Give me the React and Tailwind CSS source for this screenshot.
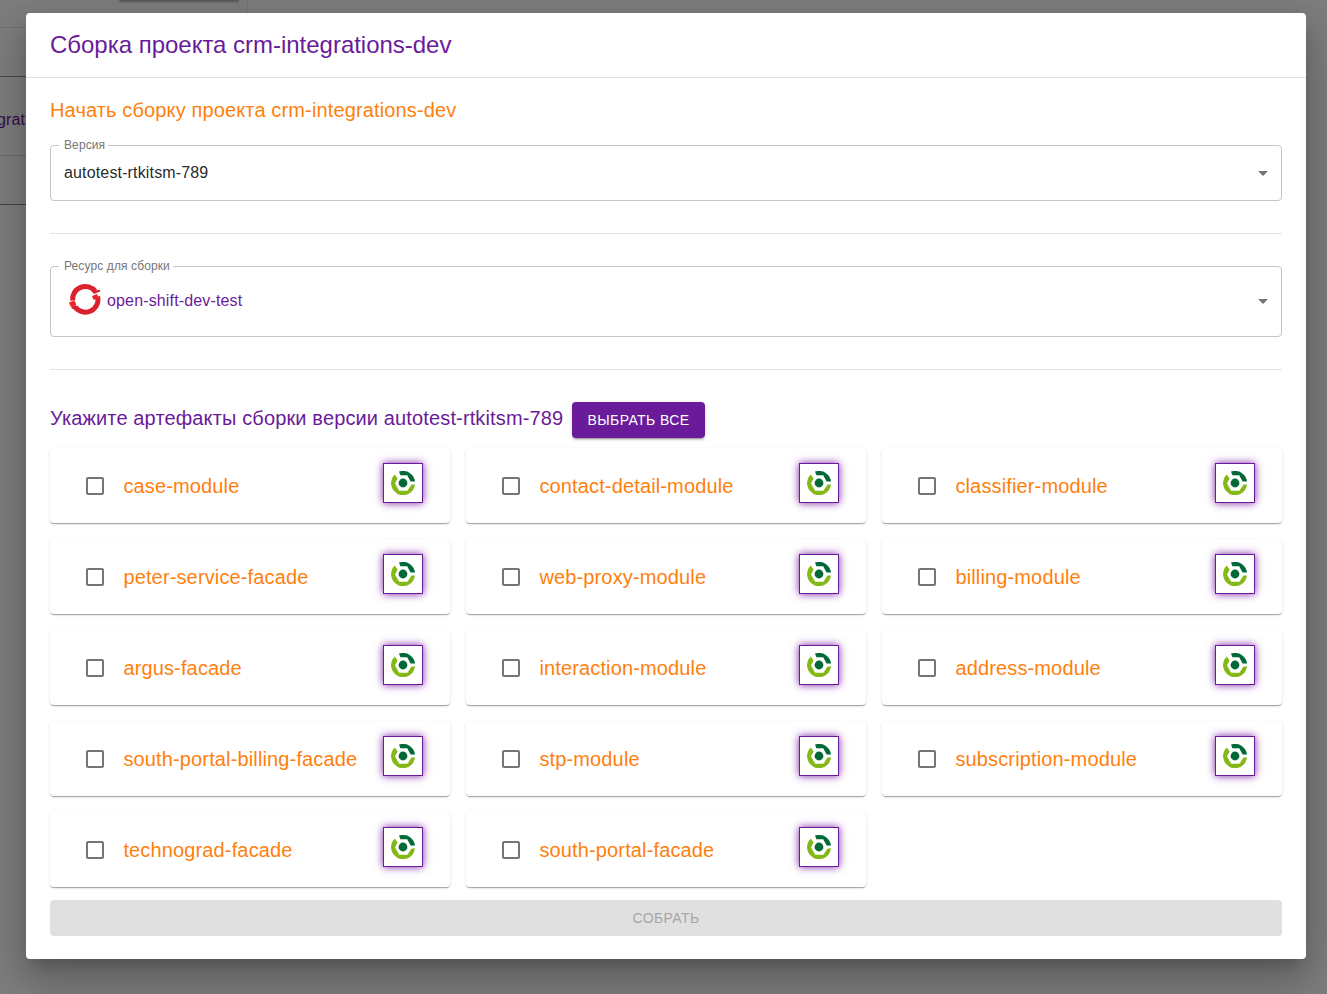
const modules = [
  'case-module', 'contact-detail-module', 'classifier-module',
  'peter-service-facade', 'web-proxy-module', 'billing-module',
  'argus-facade', 'interaction-module', 'address-module',
  'south-portal-billing-facade', 'stp-module', 'subscription-module',
  'technograd-facade', 'south-portal-facade',
];

function GoIcon() {
  return (
    <svg className="block size-6" viewBox="0 0 24 24">
      <path d="M3.7 3.6A12 12 0 1 0 24 13.6H20.6L16.4 19.8H8.2L4 12.5L6.6 7.4Z" fill="#84b817" />
      <path d="M8 .6A12 12 0 0 1 24 10.6H19.6L16.2 4.3H9.4Z" fill="#006937" />
      <circle cx="12" cy="12" r="4.4" fill="#006937" />
    </svg>
  );
}

function OpenShiftIcon() {
  return (
    <svg className="block size-8" viewBox="0 0 32 32">
      <path d="M3.700 17.500A12.600 12.600 0 0 1 26.200 8.400" stroke="#db212e" strokeWidth="5" fill="none" />
      <path d="M28.600 13.500A12.600 12.600 0 0 1 6.200 24" stroke="#db212e" strokeWidth="5" fill="none" />
      <path d="M23.400 8.600l4-1.200 3.200-1 .6 2.200-6.400 2.400zM2.600 25.200l-.4-1.800 4-1.400 2 2-3 2.600z" fill="#db212e" />
      <path d="M23 13l5-1.900 1.600 4-5 1.900zM0 19.400l5.400-1.900 2 4.300-5.700 2z" fill="#ef2424" />
    </svg>
  );
}

function Field({ label, children, height }) {
  return (
    <fieldset className={`-mt-[5px] flex rounded-[4px] border border-[#c4c4c4] pl-[13px] pr-[6px] ${height}`}>
      <legend className="-ml-[5px] h-[11px] pl-[5px] pr-[3px] text-[12px] leading-[11px] tracking-[0.11px] text-[#757575]">{label}</legend>
      <div className="-mt-[6px] flex flex-1 items-center justify-between">
        {children}
        <svg className="size-6 shrink-0" viewBox="0 0 24 24" fill="#757575"><path d="M7 10l5 5 5-5z" /></svg>
      </div>
    </fieldset>
  );
}

function Card({ name }) {
  return (
    <div className="flex h-[75px] items-start rounded-[4px] bg-white pl-[33px] pr-[27px] shadow-[0px_2px_1px_-1px_rgba(0,0,0,0.2),0px_1px_1px_0px_rgba(0,0,0,0.14),0px_1px_3px_0px_rgba(0,0,0,0.12)]">
      <svg className="mt-[26px] size-6 shrink-0" viewBox="0 0 24 24" fill="#757575">
        <path d="M19 5v14H5V5h14m0-2H5c-1.1 0-2 .9-2 2v14c0 1.1.9 2 2 2h14c1.1 0 2-.9 2-2V5c0-1.1-.9-2-2-2z" />
      </svg>
      <span className="ml-[16.4px] mt-[22px] flex-1 whitespace-nowrap text-[20px] leading-8 tracking-[0.14px] text-[#ff7f0e]">{name}</span>
      <span className="mt-[15px] flex size-10 shrink-0 justify-center border border-[#6a1b9a] bg-white pt-[7px] shadow-[0_0_8px_#7b1fa2]"><GoIcon /></span>
    </div>
  );
}

export default function App() {
  return (
    <div className="relative h-[994px] w-[1327px] overflow-hidden bg-[#7e7e7e] font-['Liberation_Sans',sans-serif]">
      <div className="w-[248px] border-r border-[#767676]">
        <div className="h-7 border-b border-[#707070] pl-[119px]">
          <div className="h-px w-[120px] rounded-b bg-[#5c5c5c] shadow-[0_1px_2px_#444]" />
        </div>
        <div className="h-[49px] border-b border-[#484848]" />
        <div className="flex h-[79px] items-center border-b border-[#6b6b6b] text-[16px] tracking-[0.15px] text-[#350d4d]">
          <span className="-ml-[3px] mt-[7px]">grat</span>
        </div>
        <div className="h-[49px] border-b border-[#444]" />
      </div>
      <div role="dialog" className="absolute left-[26px] top-[13px] h-[946px] w-[1280px] rounded-[4px] bg-white shadow-[0px_11px_15px_-7px_rgba(0,0,0,0.2),0px_24px_38px_3px_rgba(0,0,0,0.14),0px_9px_46px_8px_rgba(0,0,0,0.12)]">
        <h1 className="h-[65px] border-b border-[#e0e0e0] px-6 pt-4 text-[24px] leading-8 tracking-[-0.02px] text-[#6a1b9a]">Сборка проекта crm-integrations-dev</h1>
        <div className="px-6 pt-4">
          <h2 className="mb-[19px] text-[20px] leading-8 tracking-[0.135px] text-[#ff7f0e]">Начать сборку проекта crm-integrations-dev</h2>
          <Field label="Версия" height="h-[61px]">
            <span className="text-[16px] tracking-[0.15px] text-black/87">autotest-rtkitsm-789</span>
          </Field>
          <hr className="my-8 border-[#e0e0e0]" />
          <Field label="Ресурс для сборки" height="h-[76px]">
            <span className="-mt-[3px] flex items-start gap-[6px] pl-[5px] text-[16px] leading-8 tracking-[0.15px] text-[#6a1b9a]"><OpenShiftIcon /><span className="mt-[2px]">open-shift-dev-test</span></span>
          </Field>
          <hr className="my-8 border-[#e0e0e0]" />
          <div className="mb-[10px] flex h-9 justify-between pr-[577px]">
            <h2 className="text-[20px] leading-8 tracking-[0.135px] whitespace-nowrap text-[#6a1b9a]">Укажите артефакты сборки версии autotest-rtkitsm-789</h2>
            <button className="h-9 w-[133px] shrink-0 rounded-[4px] bg-[#6a1b9a] text-[14px] tracking-[0.4px] text-white shadow-[0px_3px_1px_-2px_rgba(0,0,0,0.2),0px_2px_2px_0px_rgba(0,0,0,0.14),0px_1px_5px_0px_rgba(0,0,0,0.12)]">ВЫБРАТЬ ВСЕ</button>
          </div>
          <div className="grid grid-cols-3 gap-4">
            {modules.map((name) => <Card key={name} name={name} />)}
          </div>
          <button disabled className="mt-[13px] h-9 w-full rounded-[4px] bg-[#e0e0e0] text-[14px] tracking-[0.4px] text-[#a6a6a6]">СОБРАТЬ</button>
        </div>
      </div>
    </div>
  );
}
